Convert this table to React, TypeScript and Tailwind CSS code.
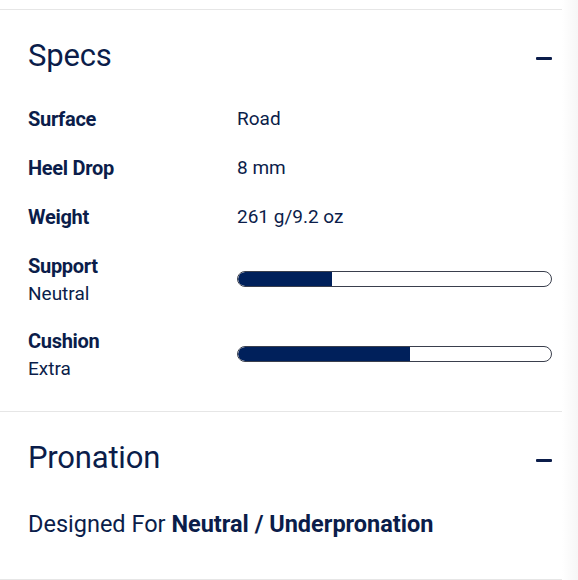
import type { ReactNode } from "react";

const navy = "text-[#0b1d4a]";

type Spec = { label: string; value?: string; sub?: string; level?: number };

const specs: Spec[] = [
  { label: "Surface", value: "Road" },
  { label: "Heel Drop", value: "8 mm" },
  { label: "Weight", value: "261 g/9.2 oz" },
  { label: "Support", sub: "Neutral", level: 30 },
  { label: "Cushion", sub: "Extra", level: 55 },
];

function Minus() {
  return <span className="block h-[3px] w-[16px] rounded-[1px] bg-[#0b1d4a]" />;
}

function Section({ title, children }: { title: string; children: ReactNode }) {
  return (
    <section className="border-b border-[#e6e6e6] pl-[28px] pr-[10px]">
      <div className="flex items-center justify-between pt-[26px] pb-[28px]">
        <h2 className={`text-[31px] leading-[40px] font-normal tracking-[-0.2px] ${navy}`}>{title}</h2>
        <div className="pt-[4px]">
          <Minus />
        </div>
      </div>
      {children}
    </section>
  );
}

function LevelBar({ level }: { level: number }) {
  return (
    <div className="h-[16px] w-full overflow-hidden rounded-full border-[1.5px] border-[#3a3f4d] bg-white">
      <div className="h-full rounded-l-full bg-[#00205b]" style={{ width: `${level}%` }} />
    </div>
  );
}

export default function App() {
  return (
    <div
      className="flex h-[580px] w-[578px] bg-white"
      style={{ fontFamily: "Roboto, 'Liberation Sans', sans-serif" }}
    >
      <div className="min-w-0 flex-1">
        <div className="h-[9px]" />
        <div className="border-t border-[#e6e6e6]">
          <Section title="Specs">
            <div className="pb-[10px]">
              {specs.map((spec) => (
                <div key={spec.label} className="grid grid-cols-[209px_1fr] items-center pb-[19px]">
                  <div>
                    <p className={`text-[20px] leading-[30px] font-bold tracking-[-0.3px] ${navy}`}>
                      {spec.label}
                    </p>
                    {spec.sub ? (
                      <p className={`text-[19px] leading-[26px] ${navy}`}>{spec.sub}</p>
                    ) : null}
                  </div>
                  {spec.level !== undefined ? (
                    <LevelBar level={spec.level} />
                  ) : (
                    <p className={`text-[19px] leading-[30px] ${navy}`}>{spec.value}</p>
                  )}
                </div>
              ))}
            </div>
          </Section>
          <Section title="Pronation">
            <p className={`-mt-[10px] pt-[13px] pb-[40px] text-[23.5px] leading-[30px] ${navy}`}>
              Designed For <span className="font-bold">Neutral / Underpronation</span>
            </p>
          </Section>
        </div>
      </div>
      <div className="w-[16px] bg-gradient-to-r from-white to-[#f6f6f6]" />
    </div>
  );
}
